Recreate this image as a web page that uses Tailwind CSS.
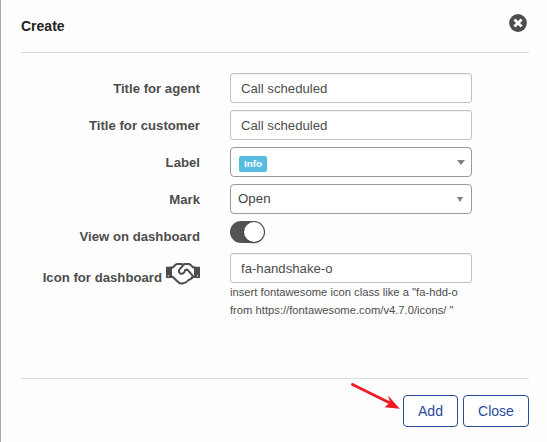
<!DOCTYPE html>
<html lang="en">
<head>
<meta charset="utf-8">
<title>Create</title>
<script src="https://cdn.jsdelivr.net/npm/@tailwindcss/browser@4"></script>
</head>
<body class="h-[442px] w-[547px] overflow-hidden bg-[#fefefe] font-['Liberation_Sans',Arial,sans-serif] text-[13.18px] text-[#4d4d4d]">
<main class="relative flex h-full flex-col border-l border-[#a8a8a8] pl-5 pr-[18px]">
  <header class="flex h-[53px] shrink-0 justify-between border-b border-[#dcdcdc] pr-[2px]">
    <h1 class="pt-4 text-[14px] leading-5 font-bold text-[#222]">Create</h1>
    <button aria-label="Close dialog" class="mt-[14px] h-[18px] w-[18px]">
      <svg viewBox="0 0 18 18" class="block h-[18px] w-[18px]"><circle cx="9" cy="9" r="8.9" fill="#4d4d4d"/><path d="M6.400 6.400l5.200 5.200M11.600 6.400l-5.200 5.200" stroke="#fff" stroke-width="2.800" stroke-linecap="square"/></svg>
    </button>
  </header>

  <form class="grid grid-cols-[179px_242px] gap-x-[30px] pt-5">
    <div class="h-[37px] pt-px text-right leading-[30px] font-bold">Title for agent</div>
    <div class="h-[30px] rounded-[3px] border border-[#c0c0c0] bg-white px-[10px] leading-[29px] shadow-[inset_0_1px_1px_rgba(0,0,0,0.06)]">Call scheduled</div>

    <div class="h-[37px] pt-px text-right leading-[30px] font-bold">Title for customer</div>
    <div class="h-[30px] rounded-[3px] border border-[#c0c0c0] bg-white px-[10px] leading-[29px] shadow-[inset_0_1px_1px_rgba(0,0,0,0.06)]">Call scheduled</div>

    <div class="h-[37px] pt-px text-right leading-[30px] font-bold">Label</div>
    <div class="flex h-[30px] items-start justify-between rounded-[4px] border border-[#999] bg-white pl-2 pr-[6px]">
      <span class="mt-2 h-4 w-7 rounded-[2px] bg-[#56bde0] text-center text-[9.9px] leading-[16px] font-bold text-white">Info</span>
      <svg viewBox="0 0 8 5" class="mt-3 h-[5px] w-2"><path d="M0 0h8L4 5z" fill="#808080"/></svg>
    </div>

    <div class="h-[37px] pt-px text-right leading-[30px] font-bold">Mark</div>
    <div class="flex h-[30px] items-start justify-between rounded-[4px] border border-[#999] bg-white pl-[7px] pr-2">
      <span class="text-[13.3px] leading-[28px] text-[#444]">Open</span>
      <svg viewBox="0 0 6 5" class="mt-3 h-[5px] w-[6px]"><path d="M0 0h6L3 5z" fill="#808080"/></svg>
    </div>

    <div class="h-[32px] pt-px text-right leading-[30px] font-bold">View on dashboard</div>
    <div class="flex h-[22px] w-[35px] justify-end rounded-full bg-[#545454] p-px">
      <span class="h-5 w-5 rounded-full bg-white shadow-[0_1px_3px_rgba(0,0,0,0.4)]"></span>
    </div>

    <div class="flex h-[40px] justify-end gap-1 font-bold">
      <span class="pt-[10px] leading-[30px]">Icon for dashboard</span>
      <svg viewBox="0 0 34 22" class="mt-[10px] h-[22px] w-[34px]" fill="none" stroke="#4d4d4d" stroke-width="2" stroke-linejoin="round" stroke-linecap="round">
        <path d="M0 3.700h6v11.300H0zM28 3.700H34v11.300h-6z" fill="#4d4d4d" stroke="none"/>
        <path d="M5 4.500h1.800L9.300 2q1-1 2.500-1h3.200l2 .8 1.800-.8H22.500q1.300 0 2.200 1l2.500 2.500H29"/>
        <path d="M5 13.800h1.600l5.500 5.200q2.200 2.200 5 1.300 3.500-.6 5.500-3.300 2.200-.7 3.300-2.200l1.300-1H29"/>
        <path d="M18 1.400l-4.300 4.800q-1.700 2.500.3 4.100 1.900 1.200 3.800-.5 1.300-1.200 1.200-2.500l2.200-.9 5 5.700q1 1.500-.2 3"/>
        <path d="M2.200 12.800h.1M31.600 12.800h.1" stroke="#fff" stroke-width="1.300"/>
      </svg>
    </div>
    <div>
      <div class="h-[30px] rounded-[3px] border border-[#c0c0c0] bg-white px-[10px] leading-[29px] shadow-[inset_0_1px_1px_rgba(0,0,0,0.06)]">fa-handshake-o</div>
      <p class="text-[11.23px] leading-[18px] whitespace-nowrap">insert fontawesome icon class like a "fa-hdd-o<br>from https://fontawesome.com/v4.7.0/icons/ "</p>
    </div>
  </form>

  <footer class="mt-auto flex h-[64px] shrink-0 items-start justify-end gap-[5px] border-t border-[#dcdcdc] pt-4 text-[14px] text-[#2a4a9e]">
    <button class="h-8 w-[55px] rounded-[4px] border border-[#2a4a9e] bg-white leading-[30px]">Add</button>
    <button class="h-8 w-[66px] rounded-[4px] border border-[#2a4a9e] bg-white leading-[30px]">Close</button>
  </footer>
  <svg viewBox="0 0 52 30" class="absolute left-[349px] top-[381px] h-[30px] w-[52px]"><path d="M2.500 3.500L40 22" stroke="#ed1c24" stroke-width="2.900" stroke-linecap="round"/><path d="M49.800 27.700L38 14.500 40 21.500 34.500 26.300z" fill="#ed1c24"/></svg>
</main>
</body>
</html>
